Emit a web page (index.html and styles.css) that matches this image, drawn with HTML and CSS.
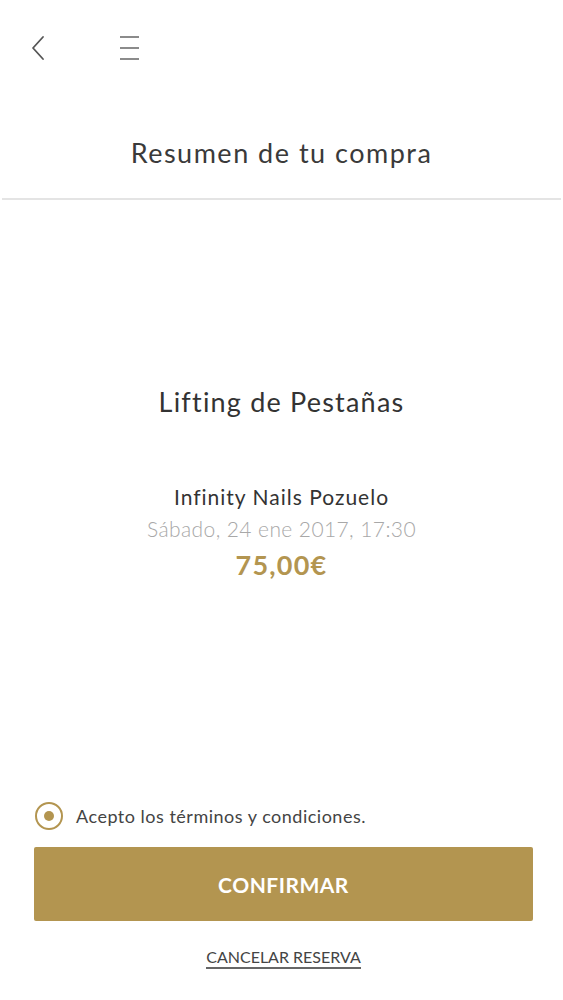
FILE: index.html
```html
<!DOCTYPE html>
<html lang="es">
<head>
    <meta charset="UTF-8">
    <meta name="viewport" content="width=device-width, initial-scale=1.0">
    <title>Resumen de tu compra</title>
    <link rel="stylesheet" href="styles.css">
</head>
<body>
    <header class="topbar">
        <button class="icon-btn back" aria-label="Volver">
            <svg width="16" height="26" viewBox="0 0 16 26"><path d="M13 2 L3 13 L13 24" fill="none" stroke="#555" stroke-width="1.8" stroke-linecap="round" stroke-linejoin="round"/></svg>
        </button>
        <button class="icon-btn menu" aria-label="Menú">
            <svg width="22" height="26" viewBox="0 0 22 26"><path d="M1 2 H20 M1 13 H20 M1 24 H20" fill="none" stroke="#666" stroke-width="1.6"/></svg>
        </button>
    </header>

    <!-- Title -->
    <section class="page-title">
        <h1>Resumen de tu compra</h1>
    </section>

    <!-- Purchase summary -->
    <main class="summary">
        <h2 class="service">Lifting de Pestañas</h2>
        <p class="salon">Infinity Nails Pozuelo</p>
        <p class="date">Sábado, 24 ene 2017, 17:30</p>
        <p class="price">75,00€</p>
    </main>

    <footer class="actions">
        <label class="terms">
            <span class="radio"><span class="dot"></span></span>
            Acepto los términos y condiciones.
        </label>
        <button class="confirm-btn">CONFIRMAR</button>
        <a class="cancel-link" href="#">CANCELAR RESERVA</a>
    </footer>
</body>
</html>
```

FILE: styles.css
```css
body {
    font-family: "Lato", "Open Sans", sans-serif;
    background: #fff;
    color: #333;
    margin: 0;
    padding: 0;
}

.topbar {
    display: flex;
    align-items: center;
    gap: 73px;
    height: 96px;
    padding: 0 0 0 30px;
}

.icon-btn {
    background: none;
    border: none;
    padding: 0;
    cursor: pointer;
    display: flex;
}

.page-title {
    height: 102px;
    display: flex;
    justify-content: center;
    align-items: center;
    border-bottom: 2px solid #e4e4e4;
    margin: 0 2px;
}

.page-title h1 {
    margin: 10px 0 0;
    font-size: 27px;
    font-weight: 400;
    color: #3a3a3a;
    letter-spacing: 1.5px;
}

.summary {
    text-align: center;
    padding-top: 185px;
    height: 380px;
    box-sizing: border-box;
}

.service {
    margin: 0 0 63px;
    font-size: 27px;
    font-weight: 400;
    color: #333;
    letter-spacing: 1.2px;
}

.salon {
    margin: 0;
    font-size: 21px;
    color: #333;
    line-height: 32px;
    letter-spacing: 1px;
}

.date {
    margin: 0;
    font-size: 21px;
    font-weight: 300;
    color: #a8a8a8;
    line-height: 32px;
    letter-spacing: 0.4px;
}

.price {
    margin: 3px 0 0;
    font-size: 27px;
    font-weight: 700;
    color: #b39550;
    line-height: 34px;
    letter-spacing: 1.2px;
}

.actions {
    display: flex;
    flex-direction: column;
    padding: 222px 30px 0 34px;
}

.terms {
    display: flex;
    align-items: center;
    gap: 13px;
    font-size: 18px;
    color: #444;
    margin-bottom: 17px;
    letter-spacing: 0.5px;
}

.radio {
    width: 24px;
    height: 24px;
    margin-left: 1px;
    border: 2px solid #b39550;
    border-radius: 50%;
    display: flex;
    justify-content: center;
    align-items: center;
}

.dot {
    width: 10px;
    height: 10px;
    border-radius: 50%;
    background: #b39550;
}

.confirm-btn {
    height: 74px;
    border: none;
    border-radius: 2px;
    background: #b39550;
    color: #fff;
    font-family: inherit;
    font-size: 21px;
    font-weight: 700;
    letter-spacing: 0.5px;
    cursor: pointer;
}

.cancel-link {
    align-self: center;
    margin-top: 26px;
    font-size: 16px;
    color: #444;
    text-decoration: none;
    border-bottom: 2px solid #666;
    padding-bottom: 1px;
}
```
